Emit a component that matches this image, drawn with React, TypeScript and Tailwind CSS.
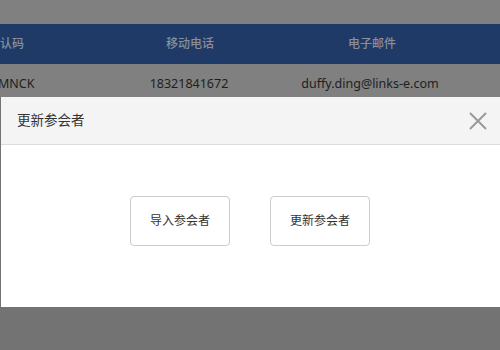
import React from "react";

const font = { fontFamily: '"Noto Sans", "Noto Sans CJK SC", sans-serif' };

const App = () => {
	return (
		<div className="w-[500px] h-[350px] bg-[#737373] overflow-hidden flex flex-col" style={font}>
			{/* page behind the overlay */}
			<div className="bg-[#808080] h-[24px]" />
			<div className="bg-[#1f3a67] h-[40px] flex items-center text-[12px] font-medium text-[#8a8f98] -ml-[17px]">
				<div className="w-[117px] pl-[5px]">确认码</div>
				<div className="w-[180px] text-center">移动电话</div>
				<div className="w-[184px] text-center">电子邮件</div>
			</div>
			<div className="bg-[#808080] h-[33px] flex items-center pt-[7px] text-[12.5px] text-[#1e1e1e] -ml-[17px]">
				<div className="w-[117px] pl-[15px]">MNCK</div>
				<div className="w-[178px] text-center">18321841672</div>
				<div className="w-[184px] text-center">duffy.ding@links-e.com</div>
			</div>

			{/* modal */}
			<div className="ml-[1px] h-[210px] bg-white flex flex-col">
				<div className="h-[48px] bg-[#f4f4f4] border-b border-[#dcdcdc] flex items-center justify-between pl-[16px] pr-[13px]">
					<span className="text-[13.5px] text-[#333]">更新参会者</span>
					<svg width="18" height="18" viewBox="0 0 18 18" className="text-[#999]">
						<path d="M1 1L17 17M17 1L1 17" stroke="currentColor" strokeWidth="2" fill="none" />
					</svg>
				</div>
				<div className="flex-1 flex justify-center items-start pt-[51px] gap-[40px] pr-[1px]">
					<button className="w-[100px] h-[50px] border border-[#cccccc] rounded-[4px] bg-white text-[12px] text-[#333]">
						导入参会者
					</button>
					<button className="w-[100px] h-[50px] border border-[#cccccc] rounded-[4px] bg-white text-[12px] text-[#333]">
						更新参会者
					</button>
				</div>
			</div>
		</div>
	);
};

export default App;
